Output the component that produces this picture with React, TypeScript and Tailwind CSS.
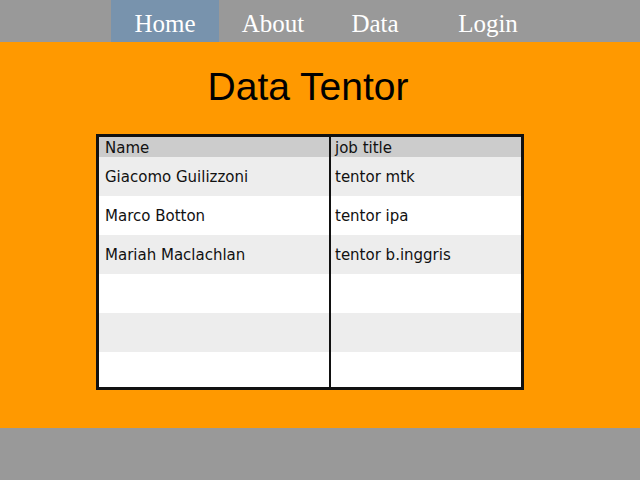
import React from "react"

const rows = [
  { name: "Giacomo Guilizzoni", job: "tentor mtk" },
  { name: "Marco Botton", job: "tentor ipa" },
  { name: "Mariah Maclachlan", job: "tentor b.inggris" },
  { name: "", job: "" },
  { name: "", job: "" },
  { name: "", job: "" },
]

export default function App() {
  return (
    <div className="w-[640px] h-[480px] flex flex-col bg-[#ff9900]">
      <nav className="h-[42px] bg-[#999999] flex pl-[111px] font-['Liberation_Serif',serif] text-[25px] text-white">
        <a className="w-[108px] flex items-center justify-center pt-[5px] bg-[#7893ad]">Home</a>
        <a className="w-[108px] flex items-center justify-center pt-[5px]">About</a>
        <a className="w-[96px] flex items-center justify-center pt-[5px]">Data</a>
        <a className="w-[130px] flex items-center justify-center pt-[5px]">Login</a>
      </nav>

      <main className="flex-1 pl-[96px]">
        <h1 className="w-[424px] text-center mt-[16px] h-[76px] font-['Liberation_Sans',sans-serif] text-[39px] text-black">
          Data Tentor
        </h1>
        <div className="w-[428px] h-[256px] border-[3px] border-[#111] bg-white flex font-['DejaVu_Sans',sans-serif] text-[15px] text-[#111]">
          <div className="w-[230px] flex flex-col">
            <div className="h-[20px] bg-[#cccccc] px-[6px] pt-[2px] flex items-center">Name</div>
            {rows.map((r, i) => (
              <div
                key={i}
                className={`${i === 5 ? "h-[35px]" : "h-[39px]"} px-[6px] pt-[2px] flex items-center ${i % 2 === 0 ? "bg-[#ededed]" : "bg-white"}`}
              >
                {r.name}
              </div>
            ))}
          </div>
          <div className="w-[2px] bg-[#111]" />
          <div className="flex-1 flex flex-col">
            <div className="h-[20px] bg-[#cccccc] px-[4px] pt-[2px] flex items-center">job title</div>
            {rows.map((r, i) => (
              <div
                key={i}
                className={`${i === 5 ? "h-[35px]" : "h-[39px]"} px-[4px] pt-[2px] flex items-center ${i % 2 === 0 ? "bg-[#ededed]" : "bg-white"}`}
              >
                {r.job}
              </div>
            ))}
          </div>
        </div>
      </main>

      <footer className="h-[52px] bg-[#999999]" />
    </div>
  )
}
